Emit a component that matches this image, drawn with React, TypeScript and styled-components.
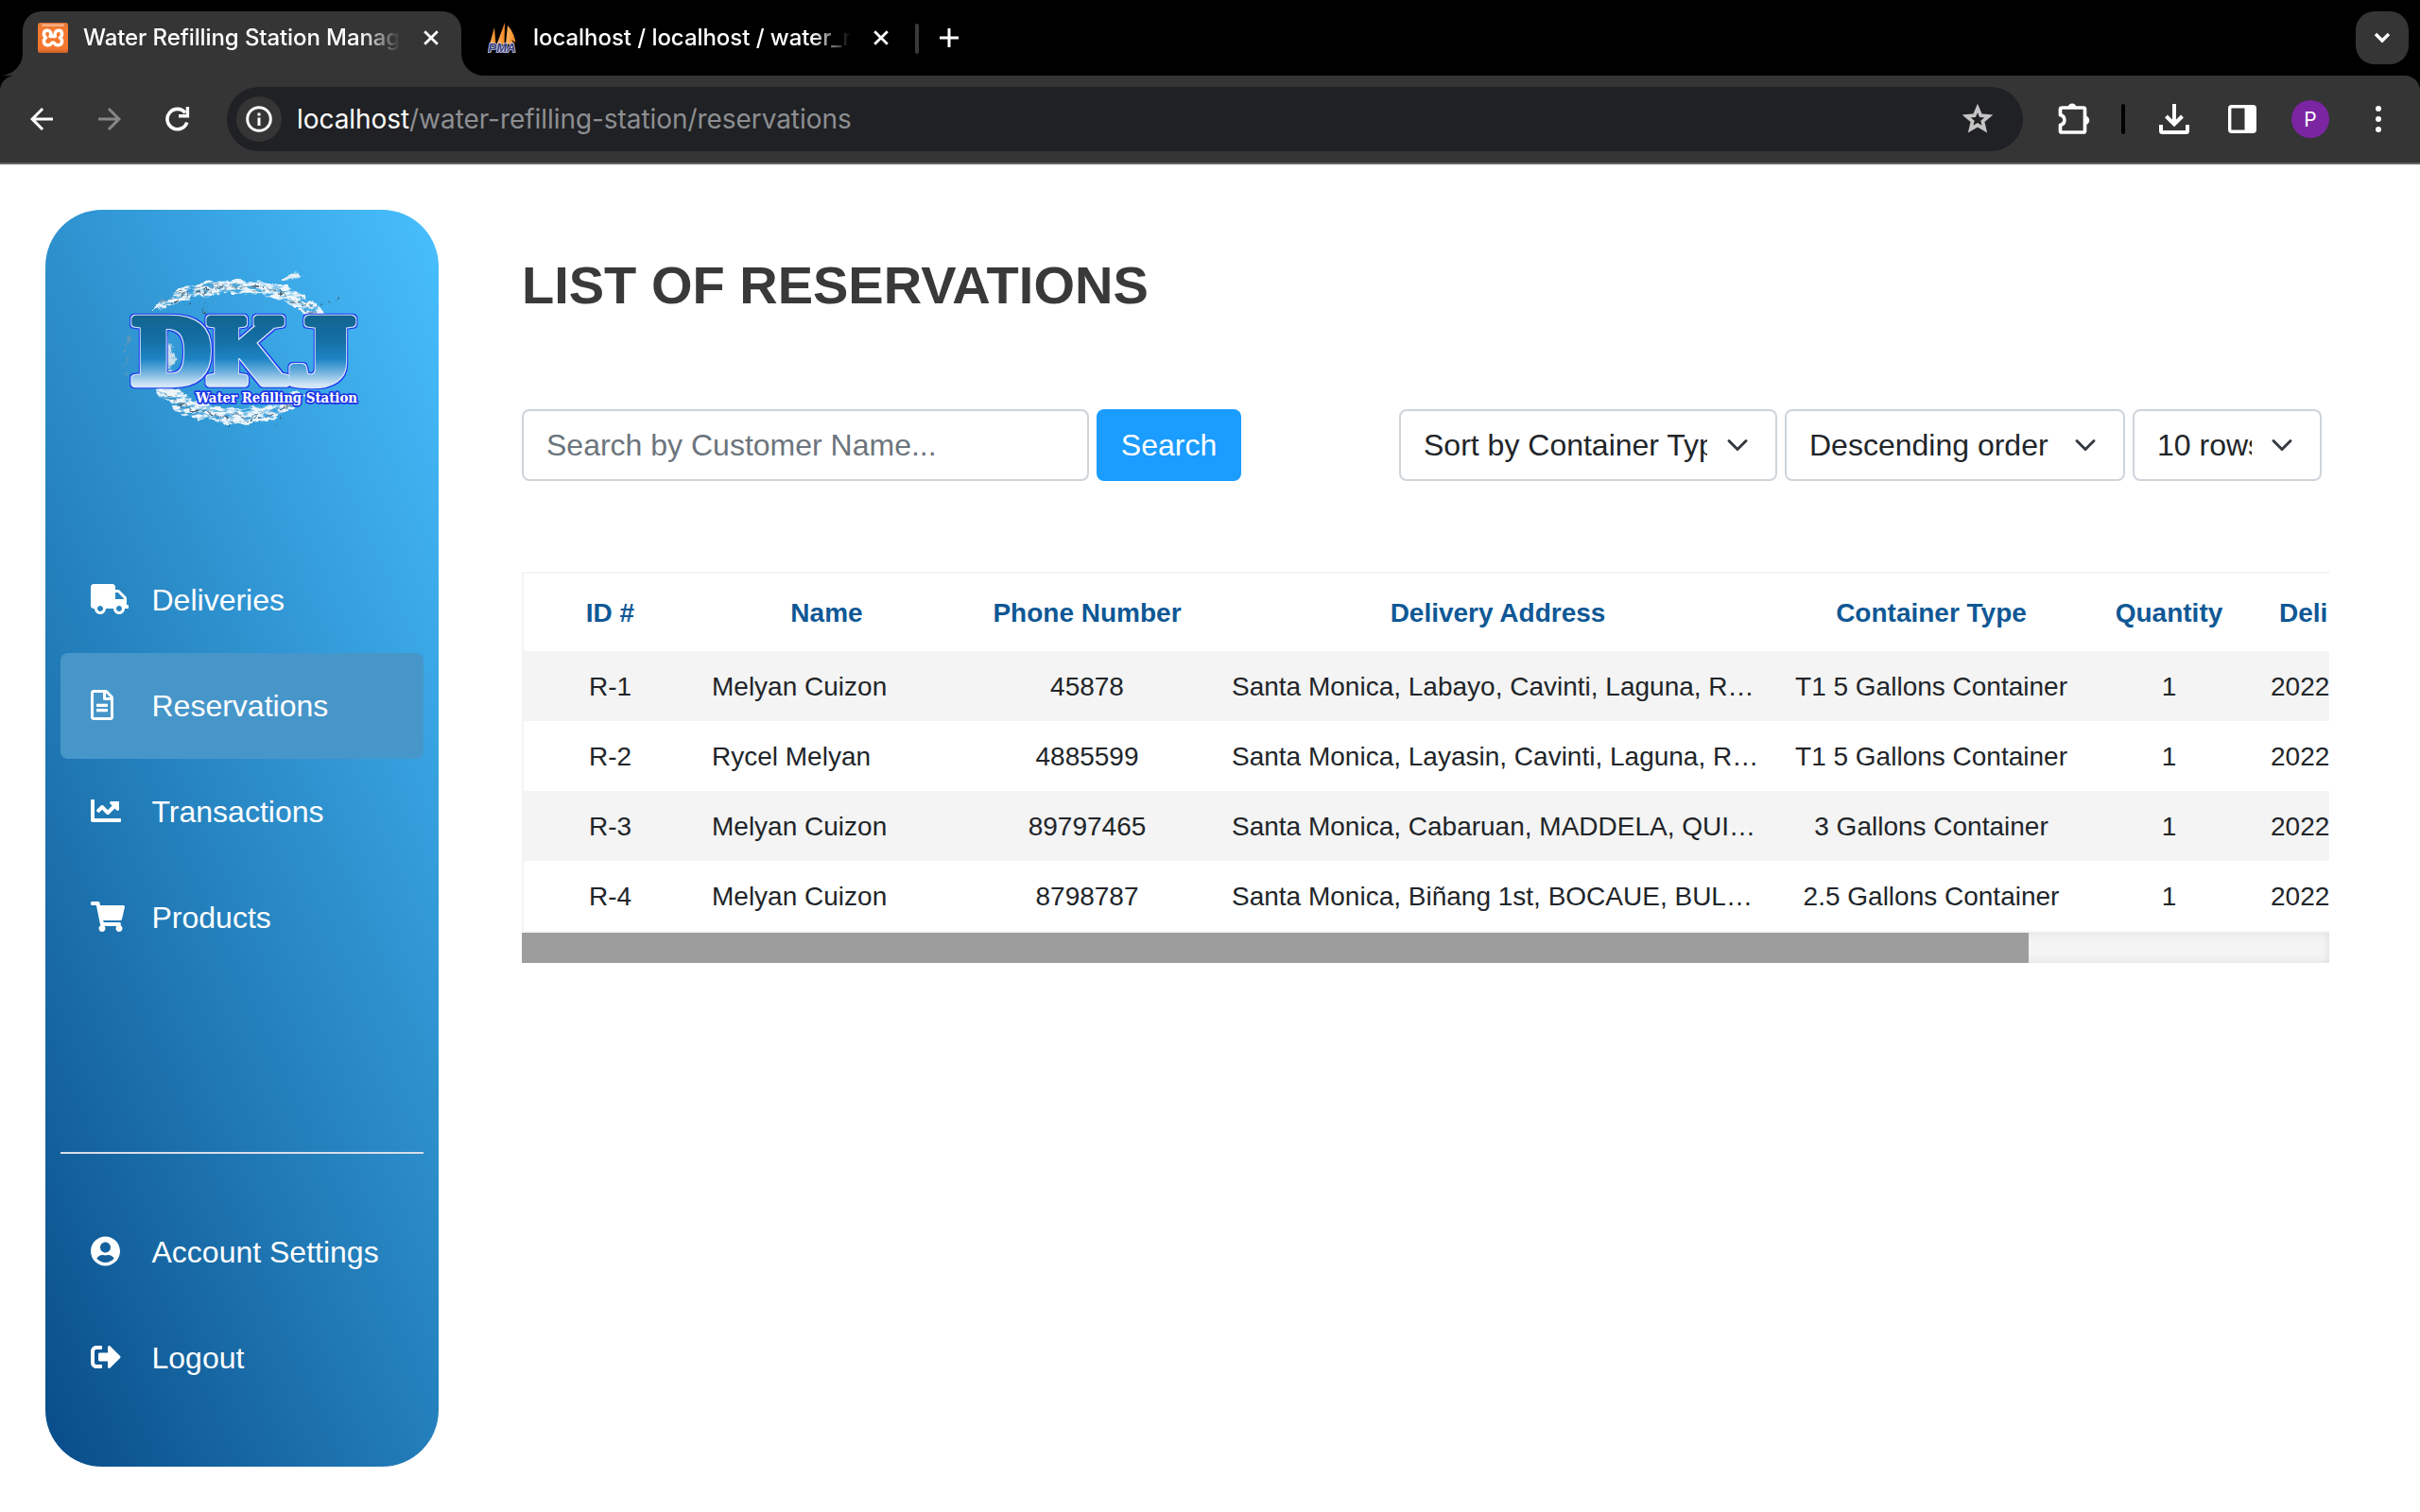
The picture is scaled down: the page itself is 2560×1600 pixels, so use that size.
import React from "react";
import styled, { createGlobalStyle, css } from "styled-components";
import {
  FaTruck,
  FaRegFileAlt,
  FaChartLine,
  FaShoppingCart,
  FaUserCircle,
  FaSignOutAlt,
} from "react-icons/fa";
import { MdArrowBack, MdArrowForward } from "react-icons/md";

const GlobalStyle = createGlobalStyle`
  * { box-sizing: border-box; }
  html, body { margin: 0; background: #fff; overflow: hidden; }
  body { font-family: "Liberation Sans", Arial, sans-serif; color: #212529; }
  button, input { font-family: inherit; }
`;

const Window = styled.div`
  width: 2560px;
  height: 1600px;
  display: flex;
  flex-direction: column;
  background: #fff;
  overflow: hidden;
`;

/* ---------- browser chrome ---------- */

const chromeFont = css`
  font-family: Inter, Roboto, sans-serif;
`;

const TabStrip = styled.header`
  height: 80px;
  flex: none;
  background: #000;
  display: flex;
  align-items: flex-start;
  padding: 12px 12px 0 24px;
`;

const Tab = styled.div<{ $active?: boolean }>`
  ${chromeFont}
  position: relative;
  width: ${(p) => (p.$active ? 464 : 480)}px;
  height: 68px;
  display: flex;
  align-items: center;
  padding: ${(p) => (p.$active ? "0 24px 12px 16px" : "0 28px 12px 28px")};
  color: #fff;
  ${(p) =>
    p.$active &&
    css`
      background: #353535;
      border-radius: 20px 20px 0 0;
      &::before,
      &::after {
        content: "";
        position: absolute;
        bottom: 0;
        width: 24px;
        height: 24px;
      }
      &::before {
        left: -24px;
        background: radial-gradient(circle at 0 0, transparent 23.5px, #353535 24.5px);
      }
      &::after {
        right: -24px;
        background: radial-gradient(circle at 100% 0, transparent 23.5px, #353535 24.5px);
      }
    `}
`;

const TabTitle = styled.span<{ $gap: number; $spacing: number }>`
  width: 336px;
  margin-left: ${(p) => p.$gap}px;
  letter-spacing: ${(p) => p.$spacing}px;
  font-size: 24px;
  font-weight: 500;
  line-height: 32px;
  white-space: nowrap;
  overflow: hidden;
  mask-image: linear-gradient(90deg, #000 calc(100% - 42px), transparent 100%);
`;

const TabClose = styled.svg`
  width: 16px;
  height: 16px;
  margin-left: auto;
  flex: none;
`;

const TabDivider = styled.i`
  width: 4px;
  height: 32px;
  margin-top: 13px;
  border-radius: 2px;
  background: #3a3a3a;
`;

const NewTab = styled.svg`
  width: 20px;
  height: 20px;
  margin: 18px 0 0 22px;
`;

const TabSearch = styled.button`
  width: 56px;
  height: 56px;
  margin-left: auto;
  padding: 0;
  border: 0;
  border-radius: 20px;
  background: #353535;
  display: grid;
  place-items: center;
`;

const ToolbarWrap = styled.div`
  flex: none;
  height: 94px;
  background: #000;
`;

const Toolbar = styled.div`
  height: 94px;
  border-bottom: 2px solid #656565;
  border-radius: 16px 16px 0 0;
  background: #353535;
  display: flex;
  align-items: center;
  color: #fff;
`;

const ToolIcon = styled.span<{ $w: number; $ml: number; $dim?: boolean }>`
  width: ${(p) => p.$w}px;
  margin-left: ${(p) => p.$ml}px;
  flex: none;
  display: flex;
  color: ${(p) => (p.$dim ? "#878787" : "#fff")};
`;

const Omnibox = styled.div`
  ${chromeFont}
  width: 1900px;
  height: 68px;
  margin-left: 39px;
  flex: none;
  border-radius: 34px;
  background: #202124;
  display: flex;
  align-items: center;
  padding: 0 31px 0 10px;
  font-size: 28px;
  letter-spacing: -0.06px;
`;

const InfoBadge = styled.span`
  width: 48px;
  height: 48px;
  border-radius: 50%;
  background: #353535;
  display: grid;
  place-items: center;
  margin-right: 16px;
`;

const UrlPath = styled.span`
  flex: 1;
  color: #8d8f92;
`;

const ToolDivider = styled.i`
  width: 4px;
  height: 32px;
  margin-left: 33px;
  border-radius: 2px;
  background: #000;
`;

const Avatar = styled.span`
  ${chromeFont}
  width: 40px;
  height: 40px;
  margin-left: 37px;
  border-radius: 50%;
  background: #7b25a2;
  color: #fff;
  font-size: 21px;
  display: grid;
  place-items: center;
`;

/* ---------- page ---------- */

const Page = styled.div`
  flex: 1;
  display: flex;
  align-items: flex-start;
  padding: 48px 96px 48px 48px;
`;

const Sidebar = styled.aside`
  width: 416px;
  height: 1330px;
  flex: none;
  padding: 0 16px;
  border-radius: 60px;
  background: linear-gradient(66deg, #084c88, #2480bc 43%, #48bfff);
`;

const LogoBox = styled.div`
  height: 357px;
  padding: 48px 54px 0;
`;

const NavItem = styled.a<{ $active?: boolean }>`
  height: 112px;
  padding: 0 32px;
  border-radius: 8px;
  display: flex;
  align-items: center;
  color: #fff;
  font-size: 32px;
  white-space: nowrap;
  background: ${(p) => (p.$active ? "#4796ca" : "transparent")};
`;

const NavIcon = styled.span<{ $w: number }>`
  width: 64.5px;
  flex: none;
  margin-bottom: 2px;
  svg {
    display: block;
    width: ${(p) => p.$w}px;
    height: 32px;
  }
`;

const Divider = styled.hr`
  height: 2px;
  border: 0;
  margin: 192px 0 48px;
  background: #d9dde8;
`;

const Main = styled.main`
  width: 1912px;
  margin-left: 88px;
  padding-top: 48px;
`;

const Title = styled.h1`
  margin: 0;
  font-size: 56px;
  line-height: 64px;
  font-weight: 700;
  color: #393939;
`;

const Controls = styled.div`
  display: flex;
  gap: 8px;
  margin-top: 99px;
`;

const SearchInput = styled.input`
  width: 600px;
  height: 76px;
  padding: 0 24px;
  border: 2px solid #ced4da;
  border-radius: 8px;
  font-size: 32px;
  &::placeholder {
    color: #6c757d;
    opacity: 1;
  }
`;

const SearchButton = styled.button`
  width: 153px;
  height: 76px;
  padding: 0;
  border: 0;
  border-radius: 8px;
  background: #1b9cff;
  color: #fff;
  font-size: 32px;
`;

const SelectBox = styled.div<{ $w: number; $push?: boolean }>`
  width: ${(p) => p.$w}px;
  height: 76px;
  margin-left: ${(p) => (p.$push ? "159px" : "0")};
  padding: 0 24px;
  border: 2px solid #ced4da;
  border-radius: 8px;
  display: flex;
  align-items: center;
  justify-content: space-between;
  font-size: 32px;
  svg {
    width: 32px;
    height: 24px;
    flex: none;
  }
`;

const SelectText = styled.span<{ $w: number }>`
  width: ${(p) => p.$w}px;
  line-height: 48px;
  overflow: hidden;
  white-space: nowrap;
`;

const TableFrame = styled.div`
  width: 1912px;
  margin-top: 96px;
  overflow: hidden;
`;

const Table = styled.div`
  width: 2390px;
  border: 2px solid #f4f4f4;
`;

const gridRow = css`
  display: grid;
  grid-template-columns: 183px 275px 276px 593px 324px 179px 1fr;
  align-items: center;
  padding-top: 2px;
  font-size: 28px;
`;

const HeadRow = styled.div`
  ${gridRow}
  height: 82px;
  color: #0f5895;
  font-weight: 700;
`;

const Row = styled.div<{ $shaded?: boolean }>`
  ${gridRow}
  height: 74px;
  background: ${(p) => (p.$shaded ? "#f4f4f4" : "#fff")};
`;

const Cell = styled.span<{ $left?: number }>`
  white-space: nowrap;
  text-align: ${(p) => (p.$left ? "left" : "center")};
  padding-left: ${(p) => p.$left ?? 0}px;
`;

const ScrollTrack = styled.div`
  height: 32px;
  background: #f4f4f4;
  box-shadow: inset 0 0 10px rgba(0, 0, 0, 0.1);
`;

const ScrollThumb = styled.div`
  width: 1594px;
  height: 32px;
  background: #9d9d9d;
`;

/* ---------- drawings ---------- */

const CloseGlyph = () => (
  <TabClose viewBox="0 0 16 16">
    <path d="M1.200 1.200 14.800 14.800M14.800 1.200 1.200 14.800" stroke="#fff" strokeWidth="2.800" />
  </TabClose>
);

const XamppFavicon = () => (
  <svg width="32" height="32" viewBox="0 0 32 32">
    <defs>
      <linearGradient id="xa" x1="0" y1="0" x2="0" y2="1">
        <stop offset="0" stopColor="#d9763a" />
        <stop offset=".18" stopColor="#f47b32" />
        <stop offset=".85" stopColor="#f5762c" />
        <stop offset="1" stopColor="#c9612a" />
      </linearGradient>
    </defs>
    <rect width="32" height="32" rx="2.500" fill="url(#xa)" />
    <rect x="4" y="1.600" width="24" height="2.200" rx="1" fill="#ffb78c" />
    <path
      d="M13 14.500c1-1.500 1.200-3 .4-4.500C12 7.300 6.600 7.600 6.400 11.600c-.1 2 .9 3.300 2.200 4.300-1.500 1-2.300 2.600-2.200 4.300.3 4.300 6.300 4.700 8 1.700.6-1.100 2.600-1.100 3.200 0 1.700 3 7.700 2.600 8-1.700.1-1.700-.7-3.300-2.200-4.300 1.300-1 2.300-2.300 2.200-4.300-.2-4-5.600-4.300-7-1.600-.7 1.500-.8 3-.2 4.500h-3.400"
      fill="none"
      stroke="#fff"
      strokeWidth="3.500"
      strokeLinecap="round"
      strokeLinejoin="round"
    />
  </svg>
);

const PmaFavicon = () => (
  <svg width="32" height="32" viewBox="0 0 32 32">
    <defs>
      <linearGradient id="sail" x1="0" y1="0" x2="1" y2="0">
        <stop offset="0" stopColor="#ffb765" />
        <stop offset="1" stopColor="#f7861c" />
      </linearGradient>
    </defs>
    <path d="M7 5 2 23h6.500z" fill="url(#sail)" />
    <path d="M18 0 9.500 23h8z" fill="url(#sail)" />
    <path d="M21 3c3.500 4 7 9 8.500 18L25 18l3 5h-9z" fill="url(#sail)" />
    <text
      x="0.500"
      y="31"
      textLength="29"
      lengthAdjust="spacingAndGlyphs"
      fontFamily="Liberation Sans, Arial, sans-serif"
      fontSize="12.500"
      fontWeight="700"
      fontStyle="italic"
      fill="#3b3f7c"
      stroke="#c9cbe6"
      strokeWidth="1.600"
      paintOrder="stroke"
    >
      PMA
    </text>
  </svg>
);

const ReloadGlyph = () => (
  <svg width="26" height="28" viewBox="0 0 26 28">
    <path d="M22.800 17.500A10.700 10.700 0 1 1 21 7.300" fill="none" stroke="#fff" strokeWidth="3.600" />
    <path d="M23.400 1v9.700H14" fill="none" stroke="#fff" strokeWidth="3.400" />
  </svg>
);

const StarGlyph = () => (
  <svg width="34" height="32" viewBox="0 0 34 32">
    <path
      d="M17 5 20.200 12.400 28.400 13.100 22.200 18.500 24.100 26.400 17 22.200 9.900 26.400 11.800 18.500 5.600 13.100 13.800 12.400z"
      transform="translate(-.6 -.7) scale(1.035)"
      fill="none"
      stroke="#c4c4c4"
      strokeWidth="3.600"
    />
  </svg>
);

const PuzzleGlyph = () => (
  <svg width="34" height="34" viewBox="0 0 34 34">
    <path
      d="M4.500 5h22.500q1.500 0 1.500 1.500v23q0 1.500-1.500 1.500H4q-1.500 0-1.500-1.500v-6.200a5.400 5.400 0 0 0 0-10.600V6.500Q2.500 5 4.500 5z"
      fill="none"
      stroke="#fff"
      strokeWidth="3.700"
      strokeLinejoin="round"
    />
    <path d="M10.500 5a4.500 4.500 0 0 1 9 0zM28.500 13.500a4.800 4.800 0 0 1 0 9.600z" fill="#fff" />
  </svg>
);

const DownloadGlyph = () => (
  <svg width="32" height="32" viewBox="0 0 32 32">
    <path
      d="M16 0v22M7.500 13 16 21.500 24.500 13M2 22v6.500Q2 30 3.500 30h25q1.500 0 1.500-1.500V22"
      fill="none"
      stroke="#fff"
      strokeWidth="4"
    />
  </svg>
);

const PanelGlyph = () => (
  <svg width="30" height="30" viewBox="0 0 30 30">
    <rect x="1.700" y="1.700" width="26.600" height="26.600" rx="2" fill="none" stroke="#fff" strokeWidth="3.400" />
    <path d="M17.500 1h10q1.500 0 1.500 1.500v25q0 1.500-1.500 1.500h-10z" fill="#fff" />
  </svg>
);

const SelectChevron = () => (
  <svg viewBox="-2.667 0 21.333 16">
    <path d="m2 5 6 6 6-6" fill="none" stroke="#343a40" strokeWidth="2" strokeLinecap="round" strokeLinejoin="round" />
  </svg>
);

/* Each letter is stretched on its own so the three nearly touch. */
const letters = [
  { ch: "D", x: 24, sx: 1.11 },
  { ch: "K", x: 103, sx: 1.03 },
  { ch: "J", x: 188, sx: 1.34 },
];

const DkjLogo = () => (
  <svg width="276" height="190" viewBox="0 0 276 190">
    <defs>
      <linearGradient id="dkj" gradientUnits="userSpaceOnUse" x1="0" y1="-70" x2="0" y2="3">
        <stop offset="0" stopColor="#12658f" />
        <stop offset=".35" stopColor="#146fa5" />
        <stop offset=".62" stopColor="#1c84c4" />
        <stop offset=".8" stopColor="#6aaede" />
        <stop offset="1" stopColor="#d3e6f6" />
      </linearGradient>
      <filter id="outline" x="-10%" y="-20%" width="120%" height="140%" colorInterpolationFilters="sRGB">
        <feMorphology in="SourceAlpha" operator="dilate" radius="1" result="inner" />
        <feMorphology in="SourceAlpha" operator="dilate" radius="2" result="outer" />
        <feFlood floodColor="#d4e6fa" />
        <feComposite in2="inner" operator="in" result="white" />
        <feFlood floodColor="#1a34ee" />
        <feComposite in2="outer" operator="in" result="blue" />
        <feMerge>
          <feMergeNode in="blue" />
          <feMergeNode in="white" />
          <feMergeNode in="SourceGraphic" />
        </feMerge>
      </filter>
      <filter id="splash" x="-10%" y="-20%" width="120%" height="140%" colorInterpolationFilters="sRGB">
        <feTurbulence type="fractalNoise" baseFrequency="0.07" numOctaves="4" seed="8" result="n" />
        <feDisplacementMap in="SourceGraphic" in2="n" scale="13" xChannelSelector="R" yChannelSelector="G" result="d" />
        <feTurbulence type="fractalNoise" baseFrequency="0.1 0.3" numOctaves="3" seed="3" />
        <feColorMatrix type="matrix" values="0 0 0 0 0  0 0 0 0 0  0 0 0 0 0  3.5 0 0 0 -0.9" result="grain" />
        <feComposite in="d" in2="grain" operator="in" />
      </filter>
    </defs>
    <g filter="url(#splash)" transform="translate(9 0)">
      <path
        d="M36 60C50 38 84 27 122 26c46 0 78 16 96 37 8 16 8 38 1 58l-9 2c2-24-1-42-12-58-20-20-44-24-78-24-32-1-56 4-84 19z"
        fill="#eef6fb"
      />
      <path d="M168 28q12-11 26-8-8 8-26 8z" fill="#e6f1f7" />
      <path d="M32 138c20 30 60 42 92 41 30-1 56-10 74-32l-14-2c-18 14-40 18-62 17-26-1-46-8-64-24z" fill="#eef6fb" />
      <path d="M52 84q8 24 6 46l-8 2q0-24-6-46z" fill="#c8dfec" />
      <path d="M4 102q1-12 10-18M5 108q1 12 4 18" fill="none" stroke="#6d97b2" strokeWidth="2" strokeDasharray="4 3" />
      <path
        d="M42 50q30-18 80-19 52 3 78 27 15 20 14 54M62 44q50-12 92-5M190 44q24 20 26 50M48 146q28 22 74 24 42 0 64-18M70 160q30 14 76 10"
        fill="none"
        stroke="#7f9cad"
        strokeWidth="1.600"
        strokeDasharray="8 3 3 5"
      />
      <path
        d="M50 52q40-24 100-17M160 38q30 8 46 32M56 153q30 18 64 19M132 174q24 0 44-14M74 50l-9 4M92 48l-5 16M206 56l8-5M222 50l14-5M170 172l-4 9M120 176l-4 6"
        fill="none"
        stroke="#3e586b"
        strokeWidth="1.500"
        strokeDasharray="2 4 6 5"
      />
    </g>
    <g
      filter="url(#outline)"
      fontFamily="Liberation Serif, Times New Roman, serif"
      fontWeight="700"
      fontSize="102"
      fill="url(#dkj)"
      stroke="url(#dkj)"
      strokeWidth="8.500"
      strokeLinejoin="round"
    >
      {letters.map((l) => (
        <text key={l.ch} transform={`translate(${l.x} 134.500) scale(${l.sx} 1)`}>
          {l.ch}
        </text>
      ))}
    </g>
    <text
      x="89"
      y="156"
      textLength="171"
      lengthAdjust="spacingAndGlyphs"
      fontFamily="DejaVu Serif, serif"
      fontWeight="700"
      fontSize="14"
      fill="#fff"
      stroke="#1c36e6"
      strokeWidth="3.600"
      strokeLinejoin="round"
      paintOrder="stroke"
    >
      Water Refilling Station
    </text>
  </svg>
);

/* ---------- data ---------- */

const mainNav = [
  { label: "Deliveries", Icon: FaTruck, width: 40 },
  { label: "Reservations", Icon: FaRegFileAlt, width: 24, active: true },
  { label: "Transactions", Icon: FaChartLine, width: 32 },
  { label: "Products", Icon: FaShoppingCart, width: 36 },
];

const accountNav = [
  { label: "Account Settings", Icon: FaUserCircle, width: 31 },
  { label: "Logout", Icon: FaSignOutAlt, width: 32 },
];

const reservations = [
  ["R-1", "Melyan Cuizon", "45878", "Santa Monica, Labayo, Cavinti, Laguna, R…", "T1 5 Gallons Container", "1", "2022"],
  ["R-2", "Rycel Melyan", "4885599", "Santa Monica, Layasin, Cavinti, Laguna, R…", "T1 5 Gallons Container", "1", "2022"],
  ["R-3", "Melyan Cuizon", "89797465", "Santa Monica, Cabaruan, MADDELA, QUI…", "3 Gallons Container", "1", "2022"],
  ["R-4", "Melyan Cuizon", "8798787", "Santa Monica, Biñang 1st, BOCAUE, BUL…", "2.5 Gallons Container", "1", "2022"],
];

const headings = ["ID #", "Name", "Phone Number", "Delivery Address", "Container Type", "Quantity", "Deli"];

const bodyIndent = [undefined, 16, undefined, 15, undefined, undefined, 18];

export default function App() {
  return (
    <Window>
      <GlobalStyle />
      <TabStrip>
        <Tab $active>
          <XamppFavicon />
          <TabTitle $gap={16} $spacing={-0.1}>
            Water Refilling Station Manage
          </TabTitle>
          <CloseGlyph />
        </Tab>
        <Tab>
          <PmaFavicon />
          <TabTitle $gap={16} $spacing={-0.05}>
            localhost / localhost / water_re
          </TabTitle>
          <CloseGlyph />
        </Tab>
        <TabDivider />
        <NewTab viewBox="0 0 20 20">
          <path d="M10 0v20M0 10h20" stroke="#fff" strokeWidth="3" />
        </NewTab>
        <TabSearch aria-label="Search tabs">
          <svg width="18" height="12" viewBox="0 0 18 12">
            <path d="m2 2 7 7 7-7" fill="none" stroke="#fff" strokeWidth="3.400" />
          </svg>
        </TabSearch>
      </TabStrip>
      <ToolbarWrap>
        <Toolbar>
          <ToolIcon $w={36} $ml={26}>
            <MdArrowBack size={36} />
          </ToolIcon>
          <ToolIcon $w={36} $ml={36} $dim>
            <MdArrowForward size={36} />
          </ToolIcon>
          <ToolIcon $w={26} $ml={41}>
            <ReloadGlyph />
          </ToolIcon>
          <Omnibox>
            <InfoBadge>
              <svg width="28" height="28" viewBox="0 0 28 28">
                <circle cx="14" cy="14" r="12.300" fill="none" stroke="#fff" strokeWidth="3" />
                <path d="M14 12.500v8.500M14 7.500v3" stroke="#fff" strokeWidth="3" />
              </svg>
            </InfoBadge>
            <span>localhost</span>
            <UrlPath>/water-refilling-station/reservations</UrlPath>
            <StarGlyph />
          </Omnibox>
          <ToolIcon $w={34} $ml={37}>
            <PuzzleGlyph />
          </ToolIcon>
          <ToolDivider />
          <ToolIcon $w={32} $ml={36}>
            <DownloadGlyph />
          </ToolIcon>
          <ToolIcon $w={30} $ml={41}>
            <PanelGlyph />
          </ToolIcon>
          <Avatar>P</Avatar>
          <ToolIcon $w={6} $ml={49}>
            <svg width="6" height="30" viewBox="0 0 6 30">
              <circle cx="3" cy="4" r="3" fill="#fff" />
              <circle cx="3" cy="15" r="3" fill="#fff" />
              <circle cx="3" cy="26" r="3" fill="#fff" />
            </svg>
          </ToolIcon>
        </Toolbar>
      </ToolbarWrap>
      <Page>
        <Sidebar>
          <LogoBox>
            <DkjLogo />
          </LogoBox>
          <nav>
            {mainNav.map(({ label, Icon, width, active }) => (
              <NavItem key={label} $active={active}>
                <NavIcon $w={width}>
                  <Icon />
                </NavIcon>
                <span>{label}</span>
              </NavItem>
            ))}
          </nav>
          <Divider />
          {accountNav.map(({ label, Icon, width }) => (
            <NavItem key={label}>
              <NavIcon $w={width}>
                <Icon />
              </NavIcon>
              <span>{label}</span>
            </NavItem>
          ))}
        </Sidebar>
        <Main>
          <Title>LIST OF RESERVATIONS</Title>
          <Controls>
            <SearchInput placeholder="Search by Customer Name..." />
            <SearchButton>Search</SearchButton>
            <SelectBox $w={400} $push>
              <SelectText $w={300}>Sort by Container Type</SelectText>
              <SelectChevron />
            </SelectBox>
            <SelectBox $w={360}>
              <SelectText $w={260}>Descending order</SelectText>
              <SelectChevron />
            </SelectBox>
            <SelectBox $w={200}>
              <SelectText $w={100}>10 rows</SelectText>
              <SelectChevron />
            </SelectBox>
          </Controls>
          <TableFrame>
            <Table>
              <HeadRow>
                {headings.map((h, i) => (
                  <Cell key={h} $left={i === 6 ? 27 : undefined}>
                    {h}
                  </Cell>
                ))}
              </HeadRow>
              {reservations.map((r, i) => (
                <Row key={r[0]} $shaded={i % 2 === 0}>
                  {r.map((value, c) => (
                    <Cell key={c} $left={bodyIndent[c]}>
                      {value}
                    </Cell>
                  ))}
                </Row>
              ))}
            </Table>
            <ScrollTrack>
              <ScrollThumb />
            </ScrollTrack>
          </TableFrame>
        </Main>
      </Page>
    </Window>
  );
}
